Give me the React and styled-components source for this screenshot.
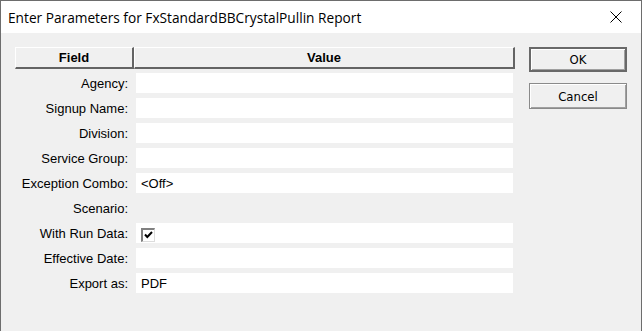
import React from 'react'
import styled, { createGlobalStyle } from "styled-components";

const GlobalStyle = createGlobalStyle`
    html, body { margin: 0; padding: 0; background: #f0f0f0; }
    body { font-family: "Liberation Sans", Arial, sans-serif; }
`;

const Window = styled.div`
    width: 642px;
    height: 331px;
    box-sizing: border-box;
    border-left: 1px solid #6d6d6d;
    border-right: 1px solid #6d6d6d;
    border-top: 1px solid #6d6d6d;
    background: #f0f0f0;
    display: flex;
    flex-direction: column;
`;

const TitleBar = styled.div`
    height: 32px;
    background: #fff;
    display: flex;
    align-items: center;
    justify-content: space-between;
    padding: 0 0 0 7px;
    font-family: "Open Sans", "Liberation Sans", sans-serif;
    font-size: 13.7px;
    color: #000;
`;

const CloseButton = styled.div`
    width: 46px;
    height: 32px;
    display: flex;
    align-items: center;
    justify-content: center;
    margin-right: 2px;
`;

const Body = styled.div`
    display: flex;
    gap: 14px;
    padding: 14px 0 0 14px;
`;

const Grid = styled.div`
    width: 500px;
    display: flex;
    flex-direction: column;
`;

const Header = styled.div`
    display: flex;
    height: 22px;
    margin-bottom: 4px;
`;

const HeaderCell = styled.div`
    width: ${p => p.$width};
    flex: ${p => p.$grow ? 1 : "none"};
    box-sizing: border-box;
    border-top: 1px solid #fff;
    border-left: 1px solid #fff;
    border-bottom: 2px solid #646464;
    border-right: 2px solid #646464;
    display: flex;
    align-items: center;
    justify-content: center;
    font-weight: bold;
    font-size: 13px;
    color: #000;
`;

const Rows = styled.div`
    display: flex;
    flex-direction: column;
    gap: 5px;
`;

const Row = styled.div`
    display: flex;
    height: 20px;
    align-items: center;
`;

const Label = styled.div`
    width: 121px;
    box-sizing: border-box;
    padding-right: 8px;
    text-align: right;
    font-size: 13px;
    color: #000;
    white-space: nowrap;
`;

const Field = styled.div`
    width: 377px;
    height: 20px;
    background: ${p => p.$empty ? "transparent" : "#fff"};
    display: flex;
    align-items: center;
    padding-left: 5px;
    box-sizing: border-box;
    font-size: 13px;
    color: #000;
`;

const CheckBox = styled.div`
    width: 14px;
    height: 14px;
    box-sizing: border-box;
    border-top: 2px solid #808080;
    border-left: 2px solid #808080;
    border-bottom: 1px solid #dcdcdc;
    border-right: 1px solid #dcdcdc;
    background: #fff;
    display: flex;
    align-items: center;
    justify-content: center;
    margin-top: 3px;
`;

const Buttons = styled.div`
    display: flex;
    flex-direction: column;
    gap: 11px;
`;

const Button = styled.div`
    width: 98px;
    height: ${p => p.$default ? "25px" : "26px"};
    box-sizing: border-box;
    background: #f0f0f0;
    border: ${p => p.$default ? "2px solid #696969" : "1px solid #8a8a8a"};
    box-shadow: inset 1px 1px 0 #fff, inset -1px -1px 0 #a0a0a0;
    display: flex;
    align-items: center;
    justify-content: center;
    font-family: "DejaVu Sans Condensed", "DejaVu Sans", sans-serif;
    font-size: 13px;
    color: #000;
`;

const fields = [
    { label: "Agency:" },
    { label: "Signup Name:" },
    { label: "Division:" },
    { label: "Service Group:" },
    { label: "Exception Combo:", value: "<Off>" },
    { label: "Scenario:", empty: true },
    { label: "With Run Data:", check: true },
    { label: "Effective Date:" },
    { label: "Export as:", value: "PDF" },
];

export default function App() {
    return (
        <React.Fragment>
            <GlobalStyle />
            <Window>
                <TitleBar>
                    <span>Enter Parameters for FxStandardBBCrystalPullin Report</span>
                    <CloseButton>
                        <svg width="12" height="12" viewBox="0 0 12 12">
                            <path d="M0.5 0.5 L11.5 11.5 M11.5 0.5 L0.5 11.5" stroke="#000" strokeWidth="1" />
                        </svg>
                    </CloseButton>
                </TitleBar>
                <Body>
                    <Grid>
                        <Header>
                            <HeaderCell $width="119px">Field</HeaderCell>
                            <HeaderCell $grow>Value</HeaderCell>
                        </Header>
                        <Rows>
                            {fields.map(f => (
                                <Row key={f.label}>
                                    <Label>{f.label}</Label>
                                    <Field $empty={f.empty}>
                                        {f.value}
                                        {f.check && (
                                            <CheckBox>
                                                <svg width="9" height="8" viewBox="0 0 9 8">
                                                    <path d="M1 3.5 L3.3 6 L8 1" stroke="#000" strokeWidth="2" fill="none" />
                                                </svg>
                                            </CheckBox>
                                        )}
                                    </Field>
                                </Row>
                            ))}
                        </Rows>
                    </Grid>
                    <Buttons>
                        <Button $default>OK</Button>
                        <Button>Cancel</Button>
                    </Buttons>
                </Body>
            </Window>
        </React.Fragment>
    )
}
